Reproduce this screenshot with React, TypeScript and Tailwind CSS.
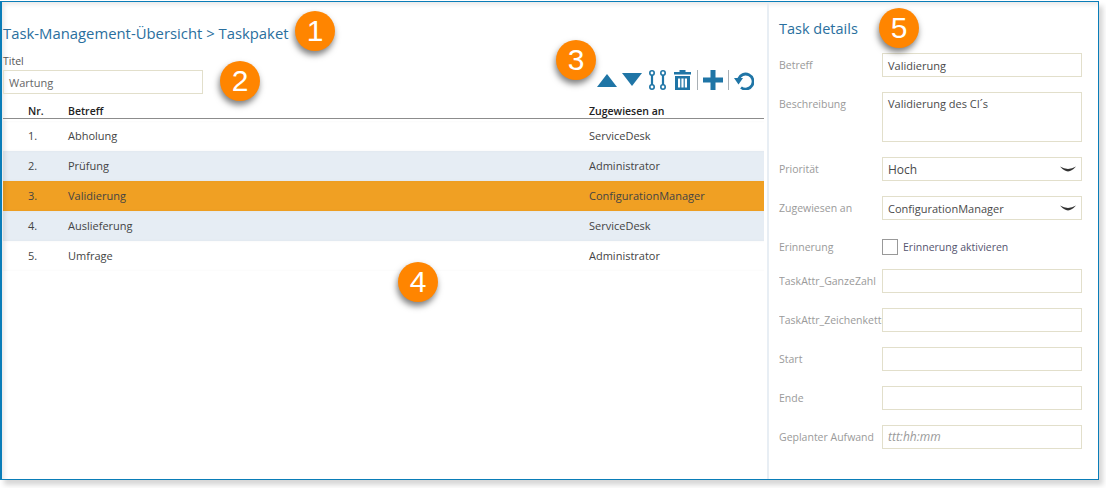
const rows = [
  { nr: "1.", subject: "Abholung", assignee: "ServiceDesk", bg: "bg-white" },
  { nr: "2.", subject: "Prüfung", assignee: "Administrator", bg: "bg-[#e6edf4]" },
  { nr: "3.", subject: "Validierung", assignee: "ConfigurationManager", bg: "bg-[#f0a023]" },
  { nr: "4.", subject: "Auslieferung", assignee: "ServiceDesk", bg: "bg-[#e6edf4]" },
  { nr: "5.", subject: "Umfrage", assignee: "Administrator", bg: "bg-white" },
];

const Badge = ({ n, className }: { n: number; className: string }) => (
  <div
    className={`absolute flex h-10 w-10 items-center justify-center rounded-full bg-[#ff8500] text-[30px] leading-none text-white shadow-[-1px_4px_6px_rgba(0,0,0,0.5)] [font-family:'Liberation_Sans',sans-serif] ${className}`}
  >
    {n}
  </div>
);

const Toolbar = () => (
  <div className="mb-[4px] flex h-5 items-center text-[#1f75a6]">
    <svg width="20" height="13" viewBox="0 0 20 13" className="mt-px fill-current">
      <path d="M10 0 20 13H0z" />
    </svg>
    <svg width="20" height="13" viewBox="0 0 20 13" className="ml-[5px] -mt-px fill-current">
      <path d="M0 0h20L10 13z" />
    </svg>
    <svg width="17" height="20" viewBox="0 0 17 20" className="ml-[7px] fill-none stroke-current" strokeWidth="1.600">
      <circle cx="3" cy="3" r="2.200" />
      <circle cx="3" cy="17" r="2.200" />
      <circle cx="14" cy="3" r="2.200" />
      <circle cx="14" cy="17" r="2.200" />
      <path d="M3 5v10M14 5v10" strokeWidth="2.200" />
    </svg>
    <svg width="17" height="20" viewBox="0 0 17 20" className="ml-[8px] fill-current">
      <path d="M5.500 0h6v2H17v2.500H0V2h5.500zM1 6h15v14H1zM4 8.500v9h2.200v-9zM7.400 8.500v9h2.200v-9zM10.800 8.500v9H13v-9z" fillRule="evenodd" />
    </svg>
    <div className="ml-[6px] h-5 w-px bg-[#a9b0b5]" />
    <svg width="20" height="20" viewBox="0 0 20 20" className="ml-[5px] fill-current">
      <path d="M7.500 0h5v7.500H20v5h-7.500V20h-5v-7.500H0v-5h7.500z" />
    </svg>
    <div className="ml-[5px] h-5 w-px bg-[#a9b0b5]" />
    <svg width="20" height="20" viewBox="0 0 20 20" className="ml-[5px] mr-[10px]">
      <path d="M4.500 9A7.500 7.500 0 1 1 7 17.500" fill="none" stroke="currentColor" strokeWidth="2.800" />
      <path d="M0 8h9l-4.500 6.500z" fill="currentColor" />
    </svg>
  </div>
);

const Field = ({ label, value, italic }: { label: string; value?: string; italic?: boolean }) => (
  <div className="flex h-6 items-center">
    <div className="w-[103px] overflow-hidden whitespace-nowrap text-[10.500px] leading-4 text-[#9a9a9a]">{label}</div>
    <div
      className={`flex h-6 w-[200px] items-center border border-[#e2dfcb] px-[5px] ${italic ? "text-[12px] italic text-[#9a9a9a]" : "text-[#4a4a4a]"}`}
    >
      {value}
    </div>
  </div>
);

const SelectField = ({ label, value, large }: { label: string; value: string; large?: boolean }) => (
  <div className="flex h-6 items-center">
    <div className="w-[103px] text-[10.500px] leading-4 text-[#9a9a9a]">{label}</div>
    <div className="flex h-6 w-[200px] items-center justify-between border border-[#e2dfcb] px-[5px] text-[#4a4a4a]">
      <span className={large ? "pt-px text-[12px]" : ""}>{value}</span>
      <svg width="16" height="6" viewBox="0 0 16 6" className="fill-[#333]">
        <path d="M0 0.500Q4 2.800 8 3 12 2.800 16 0.500 12 5 8 5.500 4 5 0 0.500z" />
      </svg>
    </div>
  </div>
);

const App = () => {
  return (
    <div className="relative h-[488px] w-[1106px] overflow-hidden bg-white pt-px text-[11px] leading-none [font-family:'Open_Sans',sans-serif]">
      <div className="flex h-[479px] w-[1099px] border border-l-2 border-[#0a7db8] shadow-[4px_5px_5px_rgba(0,0,0,0.16),inset_4px_4px_5px_-2px_rgba(0,0,0,0.1)]">
        <div className="w-[765px] shrink-0 pl-px pr-[3px] pt-[23px]">
          <h1 className="text-[14.850px] leading-4 text-[#2a6f9e]">Task-Management-Übersicht &gt; Taskpaket</h1>
          <div className="mt-[14px] flex items-end justify-between">
            <div>
              <div className="text-[10.500px] leading-3 text-[#555]">Titel</div>
              <div className="mt-[3px] flex h-6 w-[200px] items-center border border-[#e2dfcb] pl-[5px] text-[#666]">Wartung</div>
            </div>
            <Toolbar />
          </div>
          <div className="mt-[9px] flex h-[16px] items-center border-b border-[#8c8c8c] pt-[2px] text-[10.500px] font-semibold text-[#222]">
            <div className="w-[65px] pl-[25px]">Nr.</div>
            <div className="w-[521px]">Betreff</div>
            <div>Zugewiesen an</div>
          </div>
          <div className="mt-[2px]">
            {rows.map((r) => (
              <div
                key={r.nr}
                className={`flex h-[30px] items-center pb-[2px] text-[#444] shadow-[inset_4px_0_4px_-2px_rgba(0,0,0,0.1)] ${r.bg}`}
              >
                <div className="w-[65px] pl-[25px]">{r.nr}</div>
                <div className="w-[521px]">{r.subject}</div>
                <div>{r.assignee}</div>
              </div>
            ))}
          </div>
        </div>
        <div className="flex-1 border-l-2 border-[#e8eef4] pl-[10px] pt-[19px]">
          <h2 className="text-[14.500px] leading-4 text-[#2a6f9e]">Task details</h2>
          <div className="mt-[16px] flex flex-col gap-[15px]">
            <Field label="Betreff" value="Validierung" />
            <div className="flex items-start">
              <div className="w-[103px] pt-[4px] text-[10.500px] leading-4 text-[#9a9a9a]">Beschreibung</div>
              <div className="h-[50px] w-[200px] border border-[#e2dfcb] px-[5px] pt-[5px] text-[#4a4a4a]">Validierung des CI´s</div>
            </div>
            <SelectField label="Priorität" value="Hoch" large />
            <SelectField label="Zugewiesen an" value="ConfigurationManager" />
            <div className="-mb-[5px] flex h-6 items-center">
              <div className="w-[103px] text-[10.500px] leading-4 text-[#9a9a9a]">Erinnerung</div>
              <div className="h-4 w-4 border border-[#999]" />
              <div className="ml-[5px] text-[10.500px] leading-4 text-[#55556f]">Erinnerung aktivieren</div>
            </div>
            <Field label="TaskAttr_GanzeZahl" />
            <Field label="TaskAttr_Zeichenkette" />
            <Field label="Start" />
            <Field label="Ende" />
            <Field label="Geplanter Aufwand" value="ttt:hh:mm" italic />
          </div>
        </div>
      </div>
      <Badge n={1} className="left-[295px] top-[11px]" />
      <Badge n={2} className="left-[220px] top-[61px]" />
      <Badge n={3} className="left-[556px] top-[40px]" />
      <Badge n={4} className="left-[398px] top-[262px]" />
      <Badge n={5} className="left-[879px] top-[8px]" />
    </div>
  );
};

export default App;
